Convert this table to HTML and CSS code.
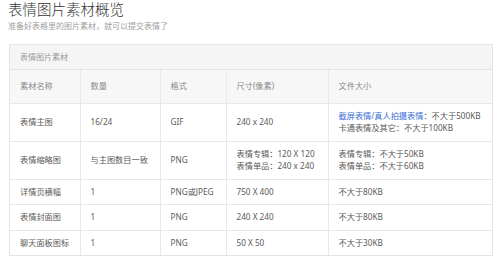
FILE: index.html
```html
<!DOCTYPE html>
<html lang="zh-CN">
<head>
<meta charset="utf-8">
<link rel="stylesheet" href="styles.css">
</head>
<body>
<div class="page">
  <h1 class="title">表情图片素材概览</h1>
  <p class="subtitle">准备好表格里的图片素材，就可以提交表情了</p>
  <div class="panel">
    <div class="panel-head">表情图片素材</div>
    <table class="grid">
      <colgroup>
        <col class="c1"><col class="c2"><col class="c3"><col class="c4"><col class="c5">
      </colgroup>
      <thead>
        <tr><th>素材名称</th><th>数量</th><th>格式</th><th>尺寸(像素)</th><th>文件大小</th></tr>
      </thead>
      <tbody>
        <tr>
          <td>表情主图</td><td>16/24</td><td>GIF</td><td>240 x 240</td>
          <td><a class="link" href="#">截屏表情/真人拍摄表情</a>：不大于500KB<br>卡通表情及其它：不大于100KB</td>
        </tr>
        <tr>
          <td>表情缩略图</td><td>与主图数目一致</td><td>PNG</td>
          <td>表情专辑：120 X 120<br>表情单品：240 x 240</td>
          <td>表情专辑：不大于50KB<br>表情单品：不大于60KB</td>
        </tr>
        <tr><td>详情页横幅</td><td>1</td><td>PNG或JPEG</td><td>750 X 400</td><td>不大于80KB</td></tr>
        <tr><td>表情封面图</td><td>1</td><td>PNG</td><td>240 X 240</td><td>不大于80KB</td></tr>
        <tr><td>聊天面板图标</td><td>1</td><td>PNG</td><td>50 X 50</td><td>不大于30KB</td></tr>
      </tbody>
    </table>
  </div>
</div>
</body>
</html>
```
FILE: styles.css
```css
html, body {
  margin: 0;
  padding: 0;
  background: #fff;
}
body {
  font-family: "Noto Sans", "Noto Sans CJK SC", sans-serif;
  color: #555;
}
.page {
  padding: 0 8px;
}
.title {
  margin: 0;
  font-size: 14.5px;
  line-height: 18px;
  font-weight: 300;
  color: #333;
}
.subtitle {
  margin: 2px 0 0;
  font-size: 8px;
  line-height: 12px;
  color: #a0a0a0;
}
.panel {
  margin: 12px 0 0 1px;
  width: 482px;
  border: 1px solid #e4e4e4;
}
.panel-head {
  height: 24px;
  line-height: 24px;
  padding-left: 10px;
  font-size: 8px;
  color: #999;
  background: #f5f5f5;
  border-bottom: 1px solid #e4e4e4;
}
.grid {
  width: 100%;
  border-collapse: collapse;
  table-layout: fixed;
  font-size: 8.2px;
}
.c1 { width: 70px; }
.c2 { width: 80px; }
.c3 { width: 66px; }
.c4 { width: 102px; }
.grid th,
.grid td {
  text-align: left;
  vertical-align: middle;
  border-right: 1px solid #e8e8e8;
  border-bottom: 1px solid #e8e8e8;
  padding: 6px 10px;
  line-height: 12.5px;
  white-space: nowrap;
}
.grid th:last-child,
.grid td:last-child {
  border-right: none;
}
.grid tbody tr:last-child td {
  border-bottom: none;
}
.grid th {
  font-weight: 400;
  color: #8a8a8a;
  background: #f7f7f7;
  padding-top: 10px;
  padding-bottom: 10px;
}
.grid td {
  color: #5a5a5a;
}
.link {
  color: #3d6fd6;
  text-decoration: none;
}
```
